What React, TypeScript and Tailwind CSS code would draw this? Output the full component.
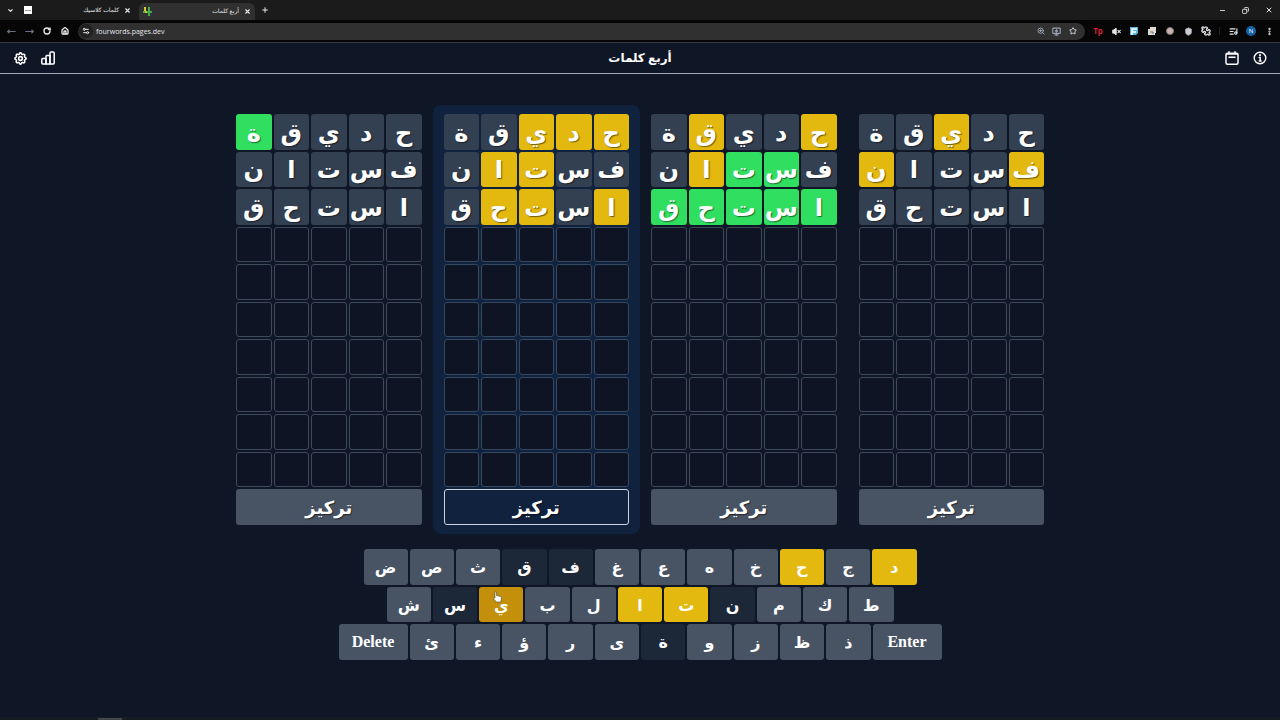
import type { ReactNode } from "react";
import { clsx } from "clsx";
import {
  ChevronDown,
  Copy,
  EllipsisVertical,
  House,
  ListMusic,
  Minus,
  MonitorDown,
  MoveLeft,
  MoveRight,
  Plus,
  Puzzle,
  RotateCw,
  Settings2,
  Shield,
  Star,
  VolumeX,
  X,
  ZoomIn,
} from "lucide-react";
import { TbSettings } from "react-icons/tb";

type Mark = "." | "y" | "g";

const words = ["حديقة", "فستان", "استحق"];

const boards = [
  { marks: ["....g", ".....", "....."], focused: false },
  { marks: ["yyy..", "..yy.", "y.yy."], focused: true },
  { marks: ["y..y.", ".ggy.", "ggggg"], focused: false },
  { marks: ["..y..", "y...y", "....."], focused: false },
];

const TOTAL_ROWS = 10;

const keyRows = [
  { keys: "دجحخهعغفقثصض", width: "max-w-[553px]" },
  { keys: "طكمنتالبيسش", width: "max-w-[507px]" },
  { keys: "ذظزوةىرؤءئ", width: "max-w-[603px]" },
];

const foundKeys = "دحتا";
const absentKeys = "فقنسة";

const tileColors: Record<Mark, string> = {
  ".": "bg-[#334052]",
  y: "bg-[#e3b80f]",
  g: "bg-[#30df60]",
};

function IconButton({
  label,
  children,
  className,
}: {
  label: string;
  children: ReactNode;
  className?: string;
}) {
  return (
    <button
      type="button"
      aria-label={label}
      className={clsx("flex shrink-0 items-center justify-center", className)}
    >
      {children}
    </button>
  );
}

function TabStrip() {
  return (
    <div className="flex h-5 items-center bg-[#1b1b1b] text-[6px] text-gray-200">
      <IconButton label="Search tabs" className="w-5">
        <ChevronDown size={7} strokeWidth={4} />
      </IconButton>
      <div className="flex w-[119px] items-center justify-between pr-2 pl-1">
        <span className="flex h-2 w-2 items-center bg-white px-px">
          <span className="h-px w-full bg-gray-400" />
        </span>
        <span className="flex items-center gap-1">
          <span dir="rtl">كلمات كلاسيك</span>
          <IconButton label="Close tab" className="w-2">
            <X size={7} strokeWidth={4} />
          </IconButton>
        </span>
      </div>
      <div className="flex h-[17px] w-[116px] items-center justify-between self-end rounded-t-md bg-[#303030] px-1">
        <svg width="9" height="9" viewBox="0 0 9 9" fill="none" strokeWidth="2">
          <path d="M2 0v5h2" stroke="#d9c92d" />
          <path d="M6 0v9M4 5h5" stroke="#3fae4e" />
          <path d="M0 5h2" stroke="#3fae4e" />
        </svg>
        <span className="flex items-center gap-1">
          <span dir="rtl">أربع كلمات</span>
          <IconButton label="Close tab" className="w-2">
            <X size={7} strokeWidth={4} />
          </IconButton>
        </span>
      </div>
      <IconButton label="New tab" className="w-5">
        <Plus size={8} strokeWidth={3} />
      </IconButton>
      <div className="ml-auto flex items-center">
        <IconButton label="Minimize" className="w-[23px]">
          <Minus size={7} strokeWidth={3} />
        </IconButton>
        <IconButton label="Restore" className="w-[23px]">
          <Copy size={7} strokeWidth={3} className="rotate-90" />
        </IconButton>
        <IconButton label="Close" className="w-[23px]">
          <X size={8} strokeWidth={3} />
        </IconButton>
      </div>
    </div>
  );
}

function Toolbar() {
  return (
    <div className="flex h-[23px] items-center border-b border-[#333a40] bg-[#060606] pr-0.5 pl-[3px] text-gray-200">
      <IconButton label="Back" className="w-4 text-gray-500">
        <MoveLeft size={9} strokeWidth={3} />
      </IconButton>
      <IconButton label="Forward" className="w-5 text-gray-500">
        <MoveRight size={9} strokeWidth={3} />
      </IconButton>
      <IconButton label="Reload" className="w-4">
        <RotateCw size={8} strokeWidth={4} />
      </IconButton>
      <IconButton label="Home" className="w-5">
        <House size={8} strokeWidth={4} />
      </IconButton>
      <div className="ml-[3px] flex h-[17px] flex-1 items-center gap-[3px] rounded-full bg-[#303030] pr-1.5 pl-px">
        <span className="flex size-[14px] items-center justify-center rounded-full bg-[#202020]">
          <Settings2 size={8} strokeWidth={3} />
        </span>
        <input
          type="text"
          aria-label="Address"
          defaultValue="fourwords.pages.dev"
          className="h-4 min-w-0 flex-1 bg-transparent text-[7px] font-medium outline-none"
        />
        <IconButton label="Zoom" className="w-[13px] text-gray-400">
          <ZoomIn size={8} strokeWidth={3} />
        </IconButton>
        <IconButton label="Install" className="w-[13px] text-gray-400">
          <MonitorDown size={9} strokeWidth={3} />
        </IconButton>
        <IconButton label="Bookmark" className="w-[13px] text-gray-300">
          <Star size={8} strokeWidth={3} />
        </IconButton>
      </div>
      <div className="ml-1 flex items-center">
        <IconButton label="Extension Tp" className="w-[18px]">
          <span className="text-[8px] leading-3 font-bold text-[#d8203f]">
            Tp
          </span>
        </IconButton>
        <IconButton label="Mute" className="w-[18px]">
          <VolumeX size={9} strokeWidth={3} fill="currentColor" />
        </IconButton>
        <IconButton label="Notes" className="w-[18px]">
          <svg width="8" height="8" viewBox="0 0 8 8">
            <path d="M0 0h8v6l-2 2H0z" fill="#5bb8dc" />
            <path d="M2 8V2h5M2 5h4" stroke="#fff" strokeWidth="1.5" fill="none" />
          </svg>
        </IconButton>
        <IconButton label="Gallery" className="w-[18px]">
          <svg width="8" height="8" viewBox="0 0 8 8">
            <path d="M2 0h6v6H7v2H0V2h2z" fill="#dedad6" />
            <path d="M2 5h3v2" stroke="#777" fill="none" />
          </svg>
        </IconButton>
        <IconButton label="Cookie" className="w-[18px]">
          <span className="size-2 rounded-full border border-[#8a7672] bg-[#c5b4b0]" />
        </IconButton>
        <IconButton label="Shield" className="w-[18px]">
          <Shield size={9} fill="#c9ccd0" stroke="#a3a7ab" />
        </IconButton>
        <IconButton label="Extensions" className="w-[18px]">
          <Puzzle size={10} strokeWidth={3} className="-scale-x-100" />
        </IconButton>
        <span className="mx-1 h-2 w-px bg-[#222]" />
        <IconButton label="Media" className="w-[18px]">
          <ListMusic size={9} strokeWidth={3} />
        </IconButton>
        <IconButton label="Profile" className="w-[18px]">
          <span className="flex size-[10px] items-center justify-center rounded-full bg-[#1463a5] text-[6px] text-white">
            N
          </span>
        </IconButton>
        <IconButton label="Menu" className="w-[18px]">
          <EllipsisVertical size={9} strokeWidth={4} />
        </IconButton>
      </div>
    </div>
  );
}

function BarsIcon() {
  return (
    <svg
      width="14"
      height="14"
      viewBox="0 0 14 14"
      fill="none"
      stroke="currentColor"
      strokeWidth="1.500"
      strokeLinejoin="round"
    >
      <path d="M1.800 7.500H4q1 0 1 1V13H1.800q-1 0-1-1V8.500q0-1 1-1z" />
      <path d="M5 13V5.500q0-1 1-1h3V13z" />
      <path d="M9 13V2q0-1 1-1h2.200q1 0 1 1v10q0 1-1 1z" />
    </svg>
  );
}

function CalendarIcon() {
  return (
    <svg
      width="14"
      height="14"
      viewBox="0 0 14 14"
      fill="none"
      stroke="currentColor"
      strokeWidth="1.500"
      strokeLinecap="round"
    >
      <rect x="1" y="2.200" width="12" height="11" rx="1.500" />
      <path d="M4 .8v1.400M10 .8v1.400M4 6.200h6M1.500 3h11" />
    </svg>
  );
}

function InfoIcon() {
  return (
    <svg
      width="14"
      height="14"
      viewBox="0 0 14 14"
      fill="none"
      stroke="currentColor"
      strokeWidth="1.400"
      strokeLinecap="round"
    >
      <circle cx="7" cy="7" r="5.800" />
      <path d="M6.200 6.500H7.200V10M6.200 10h2" />
      <circle cx="7" cy="4.200" r=".4" fill="currentColor" />
    </svg>
  );
}

function Header() {
  return (
    <header className="grid h-[31px] grid-cols-3 items-center border-b border-[#a3aabc] px-3 text-white">
      <div className="flex items-center gap-3">
        <IconButton label="الإعدادات" className="size-4">
          <TbSettings size={15} strokeWidth={2.5} />
        </IconButton>
        <IconButton label="الإحصائيات" className="size-4">
          <BarsIcon />
        </IconButton>
      </div>
      <h1 dir="rtl" className="text-center text-xs font-bold">
        أربع كلمات
      </h1>
      <div className="flex items-center justify-end gap-3">
        <IconButton label="الأرشيف" className="size-4">
          <CalendarIcon />
        </IconButton>
        <IconButton label="معلومات" className="size-4">
          <InfoIcon />
        </IconButton>
      </div>
    </header>
  );
}

function Board({ marks, focused }: { marks: string[]; focused: boolean }) {
  const letters = words.flatMap((word, row) =>
    [...word].map((letter, col) => ({ letter, mark: marks[row][col] as Mark }))
  );
  const blanks = (TOTAL_ROWS - words.length) * 5;

  return (
    <section
      dir="rtl"
      className={clsx(
        "grid h-[429px] flex-1 grid-cols-5 grid-rows-11 gap-0.5 rounded-lg px-[11px] py-[9px] text-2xl font-bold text-white",
        focused && "bg-[#10223d]"
      )}
    >
      {letters.map(({ letter, mark }, i) => (
        <div
          key={i}
          className={clsx(
            "flex min-h-0 items-center justify-center rounded-[3px] leading-8 text-shadow-[1px_1px_1px_rgb(0_0_0/0.5)]",
            tileColors[mark]
          )}
        >
          {letter}
        </div>
      ))}
      {Array.from({ length: blanks }, (_, i) => (
        <div
          key={i}
          className={clsx(
            "rounded-[3px] border bg-[#0e1424]",
            focused ? "border-[#34485f]" : "border-[#3f4a5a]"
          )}
        />
      ))}
      <button
        type="button"
        className={clsx(
          "col-span-5 flex min-h-0 items-center justify-center rounded-[3px] text-lg text-shadow-[1px_1px_1px_rgb(0_0_0/0.5)]",
          focused ? "border border-[#cbd5e1]" : "bg-[#485464]"
        )}
      >
        تركيز
      </button>
    </section>
  );
}

function keyColor(letter: string) {
  if (letter === "ي") return "bg-[#c4900c]";
  if (foundKeys.includes(letter)) return "bg-[#e3b80f]";
  if (absentKeys.includes(letter)) return "bg-[#1c2838]";
  return "bg-[#485464]";
}

const wideKey =
  "w-[69px] rounded-[3px] bg-[#485464] font-['Liberation_Serif',serif] text-base";

function Keyboard() {
  return (
    <div
      dir="rtl"
      className="flex h-[111px] w-full flex-col items-center gap-0.5 font-bold text-white"
    >
      {keyRows.map(({ keys, width }, row) => (
        <div key={row} className={clsx("flex w-full flex-1 gap-0.5", width)}>
          {row === 2 && (
            <button type="button" className={wideKey}>
              Enter
            </button>
          )}
          {[...keys].map((letter) => (
            <button
              key={letter}
              type="button"
              className={clsx(
                "relative flex min-w-0 flex-1 items-center justify-center rounded-[3px] text-base",
                keyColor(letter)
              )}
            >
              {letter}
              {letter === "ي" && <Pointer />}
            </button>
          ))}
          {row === 2 && (
            <button type="button" className={wideKey}>
              Delete
            </button>
          )}
        </div>
      ))}
    </div>
  );
}

function Pointer() {
  return (
    <svg
      className="absolute top-1 left-[14px]"
      width="9"
      height="12"
      viewBox="0 0 9 12"
      fill="#fff"
      stroke="#333"
      strokeWidth="0.5"
    >
      <path d="M2 1q1-1 1.500 0v3.500l4 1q1 .3 1 1.500l-.8 4H3.500L.8 8Q0 7 1 6.600l1 .6z" />
    </svg>
  );
}

export default function App() {
  return (
    <div className="flex min-h-screen flex-col bg-[#0f1626] font-['Open_Sans','Noto_Sans','DejaVu_Sans',sans-serif]">
      <TabStrip />
      <Toolbar />
      <Header />
      <main className="flex flex-1 flex-col items-center px-4 pt-[31px]">
        <div className="flex w-full max-w-[830px]">
          {boards.map((board, i) => (
            <Board key={i} {...board} />
          ))}
        </div>
        <div className="mt-[15px] flex w-full justify-center">
          <Keyboard />
        </div>
      </main>
      <footer className="h-[3px] bg-[#151c24] pt-px pl-[98px]">
        <div className="h-[2px] w-6 bg-[#42474d]" />
      </footer>
    </div>
  );
}
